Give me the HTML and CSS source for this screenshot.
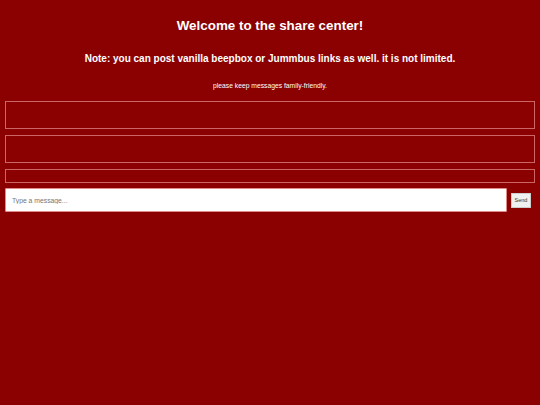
FILE: index.html
```html
<!DOCTYPE html>
<html>
<head>
<meta charset="utf-8">
<link rel="stylesheet" href="styles.css">
</head>
<body>
<h1 class="title">Welcome to the share center!</h1>
<h2 class="note">Note: you can post vanilla beepbox or Jummbus links as well. it is not limited.</h2>
<p class="rules">please keep messages family-friendly.</p>
<div class="box box-tall"></div>
<div class="box box-tall"></div>
<div class="box box-short"></div>
<div class="composer">
  <input class="msg" type="text" placeholder="Type a message...">
  <button class="send">Send</button>
</div>
</body>
</html>
```
FILE: styles.css
```css
html, body {
  margin: 0;
  background: #8b0000;
}
body {
  padding: 0 5px;
  font-family: "Liberation Sans", Arial, sans-serif;
  color: #fff;
}
.title {
  margin: 0;
  padding-top: 18px;
  font-size: 13.4px;
  line-height: 16px;
  text-align: center;
  font-weight: bold;
}
.note {
  margin: 19px 0 0;
  font-size: 10px;
  line-height: 12px;
  text-align: center;
  font-weight: bold;
}
.rules {
  margin: 17px 0 0;
  font-size: 6.75px;
  line-height: 8px;
  text-align: center;
}
.box {
  border: 1px solid #cc6666;
  box-sizing: border-box;
  margin-top: 6px;
}
.rules + .box { margin-top: 11px; }
.box-tall { height: 28px; }
.box-short { height: 14px; }
.composer {
  display: flex;
  align-items: center;
  gap: 4px;
  margin-top: 5px;
}
.msg {
  flex: 1;
  height: 24px;
  box-sizing: border-box;
  border: 1px solid #e08a8a;
  border-radius: 1px;
  background: #fff;
  padding: 0 6px;
  font-family: "Liberation Sans", Arial, sans-serif;
  font-size: 6.8px;
  outline: none;
}
.msg::placeholder { color: #777; }
.send {
  width: 20px;
  height: 15px;
  padding: 0;
  margin-right: 4px;
  border: 1px solid #ccc;
  background: #f0f0f0;
  font-family: "Liberation Sans", Arial, sans-serif;
  font-size: 5.5px;
  color: #333;
}
```
